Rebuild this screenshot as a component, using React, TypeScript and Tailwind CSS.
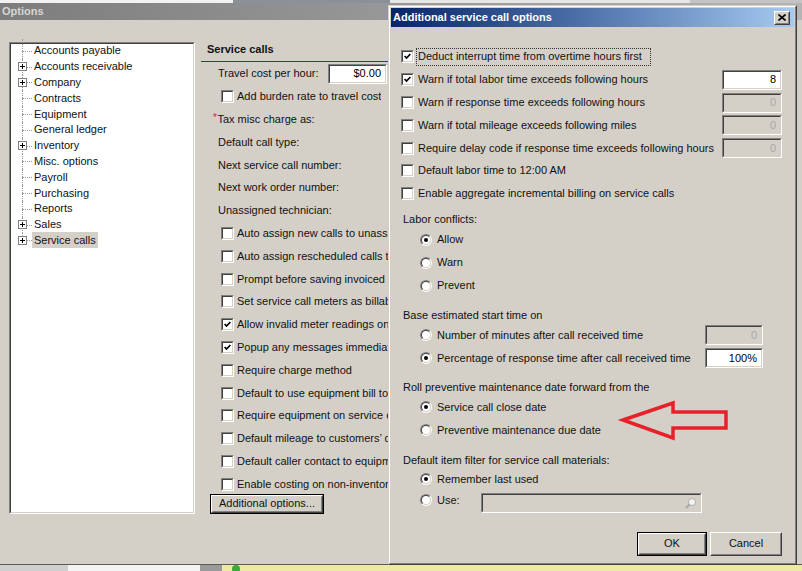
import React from 'react';

const sunkenOuter = 'border border-t-[#808080] border-l-[#808080] border-b-white border-r-white';
const sunkenInner = 'border border-t-[#404040] border-l-[#404040] border-b-[#d4d0c8] border-r-[#d4d0c8]';

function CheckBox({ checked }: { checked?: boolean }) {
  return (
    <span className={`flex w-[13px] h-[13px] shrink-0 ${sunkenOuter}`}>
      <span className={`flex flex-1 items-center justify-center bg-white ${sunkenInner}`}>
        {checked && (
          <svg width="7" height="7" viewBox="0 0 7 7">
            <polyline points="0.6,3 2.5,5 6.4,1" fill="none" stroke="#000" strokeWidth="1.7" />
          </svg>
        )}
      </span>
    </span>
  );
}

function Radio({ on }: { on?: boolean }) {
  return (
    <span className="flex w-[12px] h-[12px] shrink-0 rounded-full border border-t-[#808080] border-l-[#808080] border-b-white border-r-white">
      <span className="flex flex-1 items-center justify-center rounded-full bg-white border border-t-[#404040] border-l-[#404040] border-b-[#d4d0c8] border-r-[#d4d0c8]">
        {on && <span className="w-[4px] h-[4px] rounded-full bg-black" />}
      </span>
    </span>
  );
}

function Field({ value, disabled, className, children }: { value?: string; disabled?: boolean; className?: string; children?: React.ReactNode }) {
  return (
    <div className={`flex shrink-0 ${sunkenOuter} ${className ?? ''}`}>
      <div className={`flex flex-1 items-center justify-end pr-[4px] ${sunkenInner} ${disabled ? 'bg-[#d4d0c8] text-[#a8a8a8]' : 'bg-white text-black'}`}>
        {value}
        {children}
      </div>
    </div>
  );
}

function Button({ label, isDefault, className }: { label: string; isDefault?: boolean; className?: string }) {
  return (
    <div className={`flex shrink-0 ${isDefault ? 'border border-black' : ''} ${className ?? ''}`}>
      <div className="flex flex-1 border border-t-white border-l-white border-b-[#404040] border-r-[#404040]">
        <div className="flex flex-1 items-center justify-center border border-t-[#d4d0c8] border-l-[#d4d0c8] border-b-[#808080] border-r-[#808080]">
          {label}
        </div>
      </div>
    </div>
  );
}

const tree = [
  { t: 'Accounts payable' },
  { t: 'Accounts receivable', plus: true },
  { t: 'Company', plus: true },
  { t: 'Contracts' },
  { t: 'Equipment' },
  { t: 'General ledger' },
  { t: 'Inventory', plus: true },
  { t: 'Misc. options' },
  { t: 'Payroll' },
  { t: 'Purchasing' },
  { t: 'Reports' },
  { t: 'Sales', plus: true },
  { t: 'Service calls', plus: true, sel: true },
];

type SvcRow = { kind: 'label' | 'check' | 'tax' | 'travel'; text: string; checked?: boolean };
const svc: SvcRow[] = [
  { kind: 'travel', text: 'Travel cost per hour:' },
  { kind: 'check', text: 'Add burden rate to travel cost' },
  { kind: 'tax', text: 'Tax misc charge as:' },
  { kind: 'label', text: 'Default call type:' },
  { kind: 'label', text: 'Next service call number:' },
  { kind: 'label', text: 'Next work order number:' },
  { kind: 'label', text: 'Unassigned technician:' },
  { kind: 'check', text: 'Auto assign new calls to unassig' },
  { kind: 'check', text: 'Auto assign rescheduled calls to' },
  { kind: 'check', text: 'Prompt before saving invoiced s' },
  { kind: 'check', text: 'Set service call meters as billabl' },
  { kind: 'check', text: 'Allow invalid meter readings on', checked: true },
  { kind: 'check', text: 'Popup any messages immediate', checked: true },
  { kind: 'check', text: 'Require charge method' },
  { kind: 'check', text: 'Default to use equipment bill to' },
  { kind: 'check', text: 'Require equipment on service c' },
  { kind: 'check', text: 'Default mileage to customers\u2019 di' },
  { kind: 'check', text: 'Default caller contact to equipm' },
  { kind: 'check', text: 'Enable costing on non-inventory' },
];

const dlgChecks: { text: string; checked?: boolean; field?: string; fieldDisabled?: boolean; focus?: boolean }[] = [
  { text: 'Deduct interrupt time from overtime hours first', checked: true, focus: true },
  { text: 'Warn if total labor time exceeds following hours', checked: true, field: '8' },
  { text: 'Warn if response time exceeds following hours', field: '0', fieldDisabled: true },
  { text: 'Warn if total mileage exceeds following miles', field: '0', fieldDisabled: true },
  { text: 'Require delay code if response time exceeds following hours', field: '0', fieldDisabled: true },
  { text: 'Default labor time to 12:00 AM' },
  { text: 'Enable aggregate incremental billing on service calls' },
];

function RadioRow({ on, text, h, children }: { on?: boolean; text: string; h: string; children?: React.ReactNode }) {
  return (
    <div className={`flex items-center pl-[29px] ${h}`}>
      <Radio on={on} />
      <span className="ml-[5px] whitespace-nowrap">{text}</span>
      {children}
    </div>
  );
}

export default function App() {
  return (
    <div className="relative w-[802px] h-[571px] overflow-hidden bg-[#d4d0c8] text-[11px] leading-none text-[#111] font-['Liberation_Sans',Arial,sans-serif]">
      {/* top strip of background window */}
      <div className="flex h-[3px]">
        <div className="w-[233px] bg-[#f2f2f2]" />
        <div className="w-[157px] bg-[#8b9199]" />
        <div className="w-[300px] bg-[#e6e6e6]" />
        <div className="flex-1 bg-[#c4c4c4]" />
      </div>

      {/* Options title bar (inactive) */}
      <div className="flex h-[17px] items-center pl-[2px] bg-gradient-to-r from-[#7d7d7d] to-[#b4b4b4]">
        <span className="font-bold text-[#d8d6d0]">Options</span>
      </div>

      {/* Options body */}
      <div className="flex h-[544px] pl-[9px] pt-[22px]">
        {/* tree */}
        <div className={`flex w-[186px] h-[472px] shrink-0 ${sunkenOuter}`}>
          <div className={`flex-1 bg-white ${sunkenInner}`}>
            <div className="-mt-[1px]">
              {tree.map((it, i) => (
                <div key={it.t} className="flex h-[15.8px] items-center">
                  <div className="relative w-[21px] h-full shrink-0">
                    <div
                      className={`absolute left-[11px] border-l border-dotted border-[#9a9a9a] ${
                        i === 0 ? '-top-[4px] bottom-0' : i === tree.length - 1 ? 'top-0 h-1/2' : 'top-0 bottom-0'
                      }`}
                    />
                    <div className="absolute left-[11px] top-1/2 w-[10px] border-t border-dotted border-[#9a9a9a]" />
                    {it.plus && (
                      <div className="absolute left-[7px] top-[3px] w-[9px] h-[9px] bg-white border border-[#808080] flex items-center justify-center">
                        <svg width="5" height="5" viewBox="0 0 5 5">
                          <path d="M0 2.5 H5 M2.5 0 V5" stroke="#000" strokeWidth="1" />
                        </svg>
                      </div>
                    )}
                  </div>
                  <span className={`flex items-center h-[16px] px-[2px] whitespace-nowrap ${it.sel ? 'bg-[#d4d0c8]' : ''}`}>{it.t}</span>
                </div>
              ))}
            </div>
          </div>
        </div>

        {/* service calls panel (clipped by the dialog edge) */}
        <div className="flex flex-col ml-[6px] w-[187px] shrink-0 overflow-hidden">
          <div className="flex h-[14px] items-center pl-[6px] font-bold">Service calls</div>
          <div className="mt-[5px] h-[1px] bg-[#2c3b80]" />
          <div className="pt-[0.6px]">
            {svc.map((r) => {
              if (r.kind === 'travel')
                return (
                  <div key={r.text} className="flex h-[22.8px] items-center pl-[17px]">
                    <span className="w-[110px] shrink-0 whitespace-nowrap">{r.text}</span>
                    <Field value="$0.00" className="w-[59px] h-[20px]" />
                  </div>
                );
              if (r.kind === 'check')
                return (
                  <div key={r.text} className="flex h-[22.8px] items-center pl-[20px] overflow-hidden">
                    <CheckBox checked={r.checked} />
                    <span className="ml-[3px] whitespace-nowrap overflow-hidden">{r.text}</span>
                  </div>
                );
              if (r.kind === 'tax')
                return (
                  <div key={r.text} className="flex h-[22.8px] items-center pl-[12px]">
                    <span className="text-[#e02020] text-[10px] -mt-[3px]">*</span>
                    <span className="ml-[0.5px] whitespace-nowrap">{r.text}</span>
                  </div>
                );
              return (
                <div key={r.text} className="flex h-[22.8px] items-center pl-[17px]">
                  <span className="whitespace-nowrap">{r.text}</span>
                </div>
              );
            })}
          </div>
          <Button label="Additional options..." isDefault className="ml-[9px] -mt-[2px] w-[114px] h-[20px]" />
        </div>
      </div>

      {/* bottom border + taskbar strip */}
      <div className="h-[1px] bg-[#5a5a5a]" />
      <div className="flex h-[6px]">
        <div className="w-[68px] bg-[#cfcfcf]" />
        <div className="w-[132px] bg-[#f4f4f4]" />
        <div className="w-[22px] bg-[#9a9a9a]" />
        <div className="flex flex-1 bg-[#efe9a6] pl-[10px]">
          <span className="w-[8px] h-[8px] rounded-full bg-[#3aa83a]" />
        </div>
      </div>

      {/* Dialog window */}
      <div className="absolute left-[388px] top-[5px] w-[409px] h-[560px] flex border border-t-[#d4d0c8] border-l-[#d4d0c8] border-b-[#404040] border-r-[#404040]">
        <div className="flex flex-1 flex-col p-[1px] bg-[#d4d0c8] border border-t-white border-l-white border-b-[#808080] border-r-[#808080]">
          {/* title bar */}
          <div className="flex h-[19px] shrink-0 items-center justify-between pl-[2px] bg-gradient-to-r from-[#0a246a] to-[#a6caf0]">
            <span className="font-bold text-white">Additional service call options</span>
            <div className="flex w-[16px] h-[14px] mr-[4px] border border-t-white border-l-white border-b-[#404040] border-r-[#404040]">
              <div className="flex flex-1 items-center justify-center bg-[#d4d0c8] border border-t-[#d4d0c8] border-l-[#d4d0c8] border-b-[#808080] border-r-[#808080]">
                <svg width="8" height="7" viewBox="0 0 8 7">
                  <path d="M0.5 0.5 L7.5 6.5 M7.5 0.5 L0.5 6.5" stroke="#000" strokeWidth="1.6" />
                </svg>
              </div>
            </div>
          </div>

          {/* body */}
          <div className="flex flex-col mt-[18.6px]">
            {dlgChecks.map((c) => (
              <div key={c.text} className="flex h-[22.8px] items-center pl-[10px] pr-[12px]">
                <CheckBox checked={c.checked} />
                <span
                  className={`ml-[3px] flex items-center h-[16px] px-[1px] whitespace-nowrap ${
                    c.focus ? 'outline outline-1 outline-dotted outline-[#333] pr-[8px]' : ''
                  }`}
                >
                  {c.text}
                </span>
                <div className="flex-1" />
                {c.field !== undefined && <Field value={c.field} disabled={c.fieldDisabled} className="w-[60px] h-[20px]" />}
              </div>
            ))}

            <div className="flex h-[16px] items-center pl-[12px] mt-[6.8px]">Labor conflicts:</div>
            <div className="mt-[0.5px]">
              <RadioRow on text="Allow" h="h-[23px]" />
              <RadioRow text="Warn" h="h-[23px]" />
              <RadioRow text="Prevent" h="h-[23px]" />
            </div>

            <div className="flex h-[16px] items-center pl-[12px] mt-[10.5px]">Base estimated start time on</div>
            <RadioRow text="Number of minutes after call received time" h="h-[23px]">
              <div className="flex-1" />
              <Field value="0" disabled className="w-[58px] h-[20px] mr-[31px]" />
            </RadioRow>
            <RadioRow on text="Percentage of response time after call received time" h="h-[23px]">
              <div className="flex-1" />
              <Field value="100%" className="w-[58px] h-[20px] mr-[31px]" />
            </RadioRow>

            <div className="flex h-[16px] items-center pl-[12px] mt-[10px]">Roll preventive maintenance date forward from the</div>
            <RadioRow on text="Service call close date" h="h-[23px]" />
            <RadioRow text="Preventive maintenance due date" h="h-[23px]" />

            <div className="flex h-[16px] items-center pl-[12px] mt-[11px]">Default item filter for service call materials:</div>
            <RadioRow on text="Remember last used" h="h-[21px]" />
            <div className="flex h-[21px] items-center pl-[29px]">
              <Radio />
              <span className="ml-[5px] w-[44px] shrink-0 whitespace-nowrap">Use:</span>
              <div className={`flex w-[221px] h-[20px] mt-[5px] ${sunkenOuter}`}>
                <div className={`flex flex-1 items-center justify-end pr-[3px] bg-[#d4d0c8] ${sunkenInner}`}>
                  <svg width="12" height="12" viewBox="0 0 12 12">
                    <circle cx="7" cy="5" r="3.5" fill="#f4f4f4" stroke="#b0b0b0" strokeWidth="1" />
                    <path d="M4.5 7.5 L1 11" stroke="#a8a8a8" strokeWidth="2" />
                  </svg>
                </div>
              </div>
            </div>

            <div className="flex justify-end gap-[3px] pr-[12px] mt-[21px]">
              <Button label="OK" isDefault className="w-[70px] h-[24px]" />
              <Button label="Cancel" className="w-[72px] h-[24px]" />
            </div>
          </div>
        </div>
      </div>

      {/* red annotation arrow */}
      <svg className="absolute left-0 top-0 pointer-events-none" width="802" height="571" viewBox="0 0 802 571">
        <polygon
          points="623,420 673,403 673,412 726,412 726,428 673,428 673,438"
          fill="none"
          stroke="#e8202a"
          strokeWidth="3.5"
          strokeLinejoin="miter"
        />
      </svg>
    </div>
  );
}
